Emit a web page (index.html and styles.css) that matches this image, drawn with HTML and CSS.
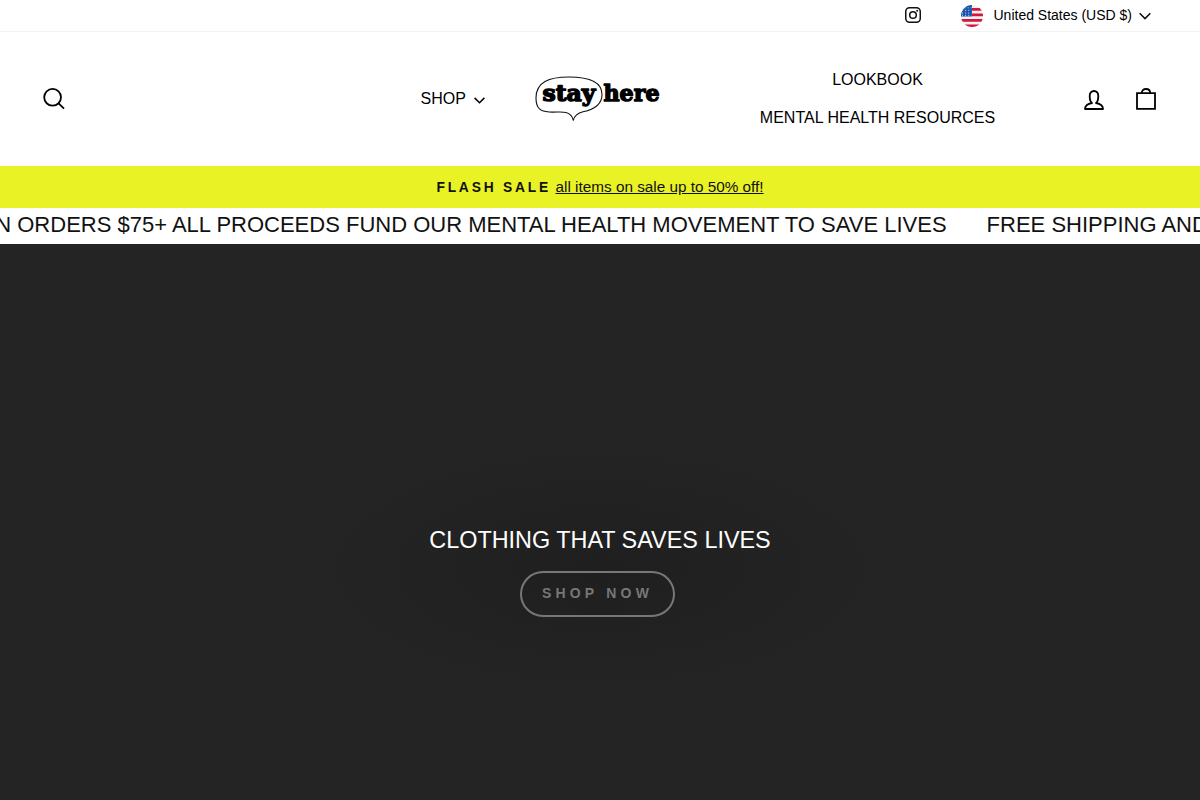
FILE: index.html
```
<!DOCTYPE html>
<html lang="en">
<head>
    <meta charset="UTF-8">
    <meta name="viewport" content="width=device-width, initial-scale=1.0">
    <title>Stay Here</title>
    <link rel="stylesheet" href="styles.css">
</head>
<body>
    <div class="toolbar">
        <a href="#" class="toolbar-social" aria-label="Instagram">
            <svg width="16" height="16" viewBox="0 0 16 16" fill="none" stroke="#111" stroke-width="1.5">
                <rect x="0.75" y="0.75" width="14.5" height="14.5" rx="3.8"/>
                <circle cx="8" cy="8" r="3.3"/>
                <circle cx="12.2" cy="3.8" r="1" fill="#111" stroke="none"/>
            </svg>
        </a>
        <button class="currency">
            <svg class="flag" width="22" height="22" viewBox="0 0 22 22">
                <clipPath id="round"><circle cx="11" cy="11" r="11"/></clipPath>
                <g clip-path="url(#round)">
                    <rect width="22" height="22" fill="#f3f1f2"/>
                    <path d="M11 4.3h11M11 9.8h11M0 15.3h22M0 20.8h22" stroke="#d3173a" stroke-width="2.8"/>
                    <rect width="11" height="11.5" fill="#1a56ad"/>
                    <path d="M3.5 2.8h7M1 5.4h9.5M1 8h9.5M1 10.3h9.5" stroke="#c5d8ef" stroke-width="1" stroke-dasharray="1 2.1"/>
                </g>
            </svg>
            <span>United States (USD $)</span>
            <svg class="chevron" width="12" height="8" viewBox="0 0 12 8" fill="none" stroke="#111" stroke-width="1.6"><path d="M0.7 1.2L6 6.5l5.3-5.3"/></svg>
        </button>
    </div>

    <header class="header">
        <a href="#" class="search" aria-label="Search">
            <svg width="24" height="24" viewBox="0 0 24 24" fill="none" stroke="#000" stroke-width="1.8">
                <circle cx="10.6" cy="10.3" r="8.4"/>
                <path d="M16.6 16.3L22 21.700"/>
            </svg>
        </a>
        <nav class="nav-left">
            <a href="#">SHOP</a>
            <svg class="nav-arrow" width="11" height="7" viewBox="0 0 11 7" fill="none" stroke="#000" stroke-width="1.5"><path d="M0.6 0.9L5.5 5.8l4.9-4.9"/></svg>
        </nav>
        <a href="#" class="logo" aria-label="stay here">
            <svg width="126" height="46" viewBox="0 0 126 46">
                <path d="M34 1C14 1 1 6 1 22c0 11 5 13.500 13 14 8 .5 12-.8 17 .5 4 1.100 6.500 3.500 7.300 8 1.200-5 4.200-7.500 9.700-8.700C59 33.500 67 29 67 18.500 67 6 54 1 34 1z" fill="none" stroke="#111" stroke-width="1.1"/>
                <text class="logo-text" x="7.5" y="25.2" textLength="53" lengthAdjust="spacingAndGlyphs">stay</text>
                <text class="logo-text" x="68.5" y="25.2" textLength="56" lengthAdjust="spacingAndGlyphs">here</text>
            </svg>
        </a>
        <nav class="nav-right">
            <a href="#">LOOKBOOK</a>
            <a href="#">MENTAL HEALTH RESOURCES</a>
        </nav>
        <div class="account">
            <a href="#" aria-label="Account">
                <svg class="person" width="20" height="20" viewBox="0 0 20 20" fill="none" stroke="#000" stroke-width="1.8" stroke-linejoin="round">
                    <path d="M8 13C6.500 12 5.700 8.500 5.700 6 5.700 3 7.300 1 10 1s4.300 2 4.300 5c0 2.500-.8 6-2.300 7 4 .7 7 2.700 7 6H1c0-3.300 3-5.300 7-6z"/>
                </svg>
            </a>
            <a href="#" aria-label="Cart">
                <svg width="20" height="22" viewBox="0 0 20 22" fill="none" stroke="#000" stroke-width="1.8">
                    <path d="M1 5.200h18v15.700H1zM5.800 5.200C5.800 2.500 7.400 1 10 1s4.200 1.500 4.200 4.200"/>
                </svg>
            </a>
        </div>
    </header>

    <div class="announcement">
        <span class="announcement-title">FLASH SALE</span>
        <a href="#">all items on sale up to 50% off!</a>
    </div>

    <div class="marquee">
        <div class="marquee-item marquee-leaving"><span>FREE SHIPPING AND RETURNS ON ORDERS $75+ ALL PROCEEDS FUND OUR MENTAL HEALTH MOVEMENT TO SAVE LIVES</span></div>
        <div class="marquee-item"><span>FREE SHIPPING AND RETURNS ON ORDERS $75+</span></div>
    </div>

    <section class="hero">
        <h1>CLOTHING THAT SAVES LIVES</h1>
        <a href="#" class="shop-now">SHOP NOW</a>
    </section>
</body>
</html>
```
FILE: styles.css
```
* {
    box-sizing: border-box;
}
body {
    margin: 0;
    height: 800px;
    overflow: hidden;
    display: flex;
    flex-direction: column;
    font-family: "Liberation Sans", Arial, sans-serif;
    color: #000;
    background-color: #fff;
}
a {
    color: inherit;
    text-decoration: none;
}
svg {
    display: block;
}
.toolbar {
    display: flex;
    align-items: center;
    justify-content: flex-end;
    flex: none;
    height: 32px;
    padding-right: 49px;
    padding-bottom: 1px;
    border-bottom: 1px solid #f2f2f2;
}
.toolbar-social {
    margin-right: 40px;
}
.currency {
    display: flex;
    align-items: center;
    padding: 0;
    border: none;
    background: none;
    font: 14px "Liberation Sans", Arial, sans-serif;
    color: #000;
}
.flag {
    margin-top: 2px;
    margin-right: 10.5px;
}
.chevron {
    margin-top: 1px;
    margin-left: 7px;
}
.header {
    display: grid;
    grid-template-columns: 378.5px 114.5px 126px 433px 1fr;
    align-items: center;
    flex: none;
    height: 134px;
    padding-left: 42px;
    padding-right: 44px;
    font-size: 16px;
}
.nav-left {
    display: flex;
    align-items: center;
    gap: 8.5px;
}
.nav-arrow {
    margin-top: 2px;
}
.nav-right {
    display: flex;
    flex-direction: column;
    align-items: center;
    line-height: 38px;
}
.logo svg {
    overflow: visible;
}
.logo-text {
    font: bold 22px "DejaVu Serif", serif;
    fill: #000;
    stroke: #000;
    stroke-width: 1.4px;
    stroke-linejoin: round;
}
.account {
    display: flex;
    align-items: center;
    gap: 32px;
    margin-left: -10px;
}
.person {
    margin-top: 2px;
}
.announcement {
    display: flex;
    align-items: center;
    justify-content: center;
    gap: 4.5px;
    flex: none;
    height: 42px;
    font-size: 15.3px;
    color: #111;
    background-color: #e9f224;
}
.announcement-title {
    font-size: 13.8px;
    font-weight: bold;
    letter-spacing: 2.8px;
}
.announcement a {
    text-decoration: underline;
}
.marquee {
    display: flex;
    gap: 40px;
    flex: none;
    height: 36px;
    overflow: hidden;
    line-height: 34px;
    font-size: 22px;
    color: #111;
    white-space: nowrap;
}
.marquee-item {
    flex: none;
}
.marquee-leaving {
    display: flex;
    justify-content: flex-end;
    width: 946.6px;
}
.hero {
    display: flex;
    flex-direction: column;
    align-items: center;
    flex: 1;
    padding-top: 283px;
    background: radial-gradient(ellipse 290px 125px at 600px 325px, #1f1f1f, #242424);
}
.hero h1 {
    margin: 0 0 17px;
    font-size: 23.4px;
    font-weight: normal;
    line-height: 27px;
    color: #fff;
}
.shop-now {
    width: 155px;
    height: 46px;
    margin-right: 5px;
    border: 2px solid #777;
    border-radius: 23px;
    line-height: 41px;
    text-align: center;
    font-size: 14px;
    font-weight: bold;
    letter-spacing: 4.2px;
    color: #777;
}
```
